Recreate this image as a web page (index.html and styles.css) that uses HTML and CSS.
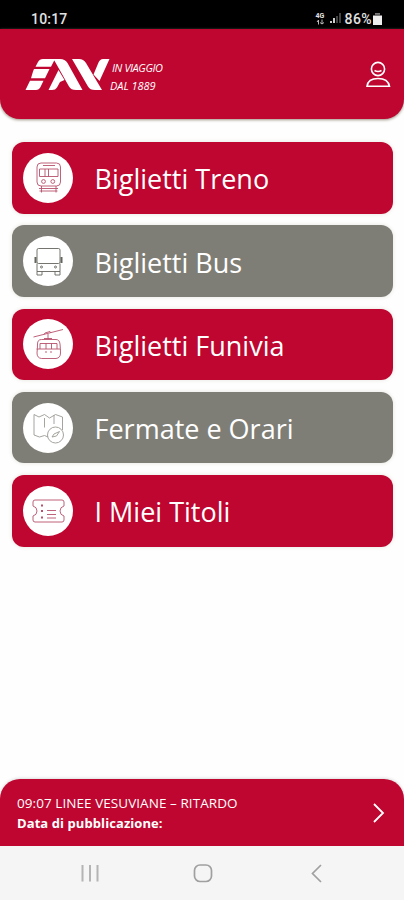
FILE: index.html
```html
<!DOCTYPE html>
<html lang="it">
<head>
<meta charset="utf-8">
<title>EAV</title>
<link rel="stylesheet" href="styles.css">
</head>
<body>
<div class="status">
  <span class="time">10:17</span>
  <span class="net"><b>4G</b><svg width="9" height="6" viewBox="0 0 9 6"><path d="M2.500 5.500V1M1 3L2.500 1M6 .5V5M4 3.500L6 5L8 3.500"/></svg></span>
  <svg class="signal" width="12" height="11" viewBox="0 0 12 11"><path class="on" d="M0 10V8h2v2zM3 10V5h2v5z"/><path class="off" d="M6 10V3h2v7zM9 10V0h2v10z"/></svg>
  <span class="pct">86%</span>
  <svg class="battery" width="9" height="12" viewBox="0 0 9 12"><path d="M0 2.500h9V12H0z"/><path class="cap" d="M2 0h5v1.800H2z"/></svg>
</div>
<header class="header">
  <svg class="logo" width="86" height="34" viewBox="24 57 86 34">
    <path d="M43 59H55L51 66.700H35.500L38 62Q39.500 59 43 59ZM34 69H49.500L45 78.300H31L33 71.500ZM30 80.800H43.500L40.500 87Q39 90 36 90H25.500ZM53.500 59H60Q65 59 67.500 63L82.500 90H76Q71 90 69 86.500ZM58.500 70L64.500 80L60 82L57 87.500Q55.500 90 52 90H48.500ZM72 59H79Q83.500 59 86 63L102 90H95Q90 90 88 86.500ZM103 59H109.500L99.500 81L93.500 74.500L98.500 62.500Q100 59 103 59Z"/>
  </svg>
  <div class="motto"><span>IN VIAGGIO</span><span>DAL 1889</span></div>
  <svg class="user" width="26" height="28" viewBox="365 60 26 28"><circle cx="378" cy="69" r="6.600"/><path d="M374.500 70.500Q378 72.500 381.500 70.500M367 86.300Q368 78.500 378 78.500T389.500 86.300Z"/></svg>
</header>
<main class="menu">
  <a class="card"><span class="disc"><svg viewBox="0 0 50 50"><rect x="14" y="10" width="23.500" height="23" rx="4"/><path d="M20 12.500h12M16.500 16h18.500v7.500H16.500zM22 16v7.500M25.500 16v7.500M16 35.500h19M18.500 33v6.500M33 33v6.500M16.500 38h18"/><circle cx="20.500" cy="28.500" r="1.900"/><circle cx="29.800" cy="28.500" r="1.900"/></svg></span><span class="label">Biglietti Treno</span></a>
  <a class="card grey"><span class="disc"><svg viewBox="0 0 50 50"><rect x="14" y="12.500" width="23" height="15" rx="1.500"/><path d="M14 27.500v8h23v-8M14 35.500v3.500h5v-3.500M32 35.500v3.500h5v-3.500"/><path class="mirror" d="M12.500 21v6M38.500 21v6"/><circle cx="18.500" cy="31" r="1"/><circle cx="32.500" cy="31" r="1"/></svg></span><span class="label">Biglietti Bus</span></a>
  <a class="card"><span class="disc"><svg viewBox="0 0 50 50"><path d="M10.500 18L40 10.500M21 15.500l1-1.500 5-1.500 1 1.500M25 15v5M21 19.500h8M18.500 20.500q-4 0-4 4.500t-.5 9q0 5 4.500 5.500h14.500q4.500-.5 4.500-5.500 0-4.500-.5-9t-4-4.500zM17 24.500h17v5.500H17zM23 24.500v5.500M28.500 24.500v5.500M13.500 30H17M34 30h3.500M23 32v2M28 32v2"/></svg></span><span class="label">Biglietti Funivia</span></a>
  <a class="card grey"><span class="disc"><svg class="light" viewBox="0 0 50 50"><path d="M25 34l-3.500-1.500-5 1.500-5.500-2V11.500l5 2.500 5.500-2.500 5 3.500 6-3.500 7 2.500v13M21.500 15v9.500M31 12v9"/><circle cx="32.500" cy="32" r="8"/><path d="M29 34l2-3 5.500-2.500-3 4.500z"/></svg></span><span class="label">Fermate e Orari</span></a>
  <a class="card"><span class="disc"><svg viewBox="0 0 50 50"><path d="M10 16q0-2 2-2h27q2 0 2 2v4q-4 1-4 5t4 5v4q0 2-2 2H12q-2 0-2-2v-4q4-1 4-5t-4-5z"/><path d="M24 24.500h9M24 28.500h9M24 32h9"/><path class="dots" d="M18 19.500h2M18 25h2M18 31.500h2"/></svg></span><span class="label">I Miei Titoli</span></a>
</main>
<section class="notice">
  <div><p class="title">09:07 LINEE VESUVIANE – RITARDO</p><p class="strong">Data di pubblicazione:</p></div>
  <svg width="12" height="20" viewBox="0 0 12 20"><path d="M1 1l9 9-9 9"/></svg>
</section>
<nav class="nav">
  <svg viewBox="0 847 404 53"><path class="recent" d="M82.500 866v16.500M90 866v16.500M97.500 866v16.500"/><rect x="194.500" y="866" width="17" height="16.500" rx="5.500"/><path d="M321 866l-8.500 8.500 8.500 8.500"/></svg>
</nav>
</body>
</html>
```
FILE: styles.css
```css
* { box-sizing: border-box; }
body { margin: 0; width: 404px; height: 900px; display: flex; flex-direction: column; background: #fefefe; font-family: "Open Sans", "Noto Sans", sans-serif; overflow: hidden; }
svg { display: block; flex: none; }
p { margin: 0; }
.status { height: 29px; flex: none; background: #000; color: #e2e2e2; display: flex; align-items: center; padding: 8px 22px 0 31px; font: 500 14px/20px Roboto, sans-serif; }
.time { margin-right: auto; letter-spacing: .2px; }
.net { width: 10px; margin-right: 4px; }
.net b { display: block; font-size: 7px; line-height: 6px; }
.net svg { fill: none; stroke: #bbb; }
.signal { margin-right: 3px; }
.on { fill: #ccc; }
.off { fill: #444; }
.pct { letter-spacing: .4px; margin-right: 1px; }
.battery { fill: #eee; }
.cap { fill: #777; }
.header { height: 90px; flex: none; background: #be0630; border-radius: 0 0 20px 20px; box-shadow: 0 1px 3px #9a9080; display: flex; padding: 28px 13px 0 24px; color: #fff; }
.logo { fill: #fff; }
.motto { display: flex; flex-direction: column; font: italic 11px/18px "Open Sans", sans-serif; padding-top: 1.500px; letter-spacing: -.4px; }
.motto span:first-child { padding-left: 2px; }
.motto span:last-child { letter-spacing: -.05px; }
.user { margin: 3px 0 0 auto; fill: none; stroke: #fff; stroke-width: 1.6; }
.menu { flex: 1; display: flex; flex-direction: column; gap: 11.800px; padding: 23px 11px 0 12px; }
.card { height: 71.500px; flex: none; border-radius: 12px; background: #be0630; color: #fff; display: flex; align-items: center; gap: 22px; padding-left: 10.500px; font-size: 27px; box-shadow: 0 0 4px #e5e4df; white-space: nowrap; }
.label { padding-top: 2px; }
.grey { background: #7f7e76; }
.disc { width: 50px; height: 50px; flex: none; border-radius: 50%; background: #fff; }
.disc svg { width: 50px; height: 50px; fill: none; stroke: #b8506c; stroke-width: .9; }
.grey svg { stroke: #65645e; }
.grey svg.light { stroke: #9b9a94; }
.disc .mirror { stroke-width: 2; }
.disc .dots { stroke-width: 2; }
.notice { height: 67px; flex: none; background: #be0630; color: #fff; border-radius: 20px 20px 0 0; box-shadow: 0 -1px 3px #ddd; display: flex; justify-content: space-between; align-items: center; padding: 0 19px 0 17px; font-size: 13px; line-height: 20px; }
.title { font-size: 13.500px; letter-spacing: .06px; }
.strong { font-weight: 700; letter-spacing: .08px; }
.notice svg { fill: none; stroke: #fff; stroke-width: 1.800; }
.nav { height: 54px; flex: none; background: #f5f5f5; }
.nav svg { width: 404px; height: 53px; fill: none; stroke: #a0a0a0; stroke-width: 1.700; }
.nav .recent { stroke: #b4b4b4; stroke-width: 2; }
```
